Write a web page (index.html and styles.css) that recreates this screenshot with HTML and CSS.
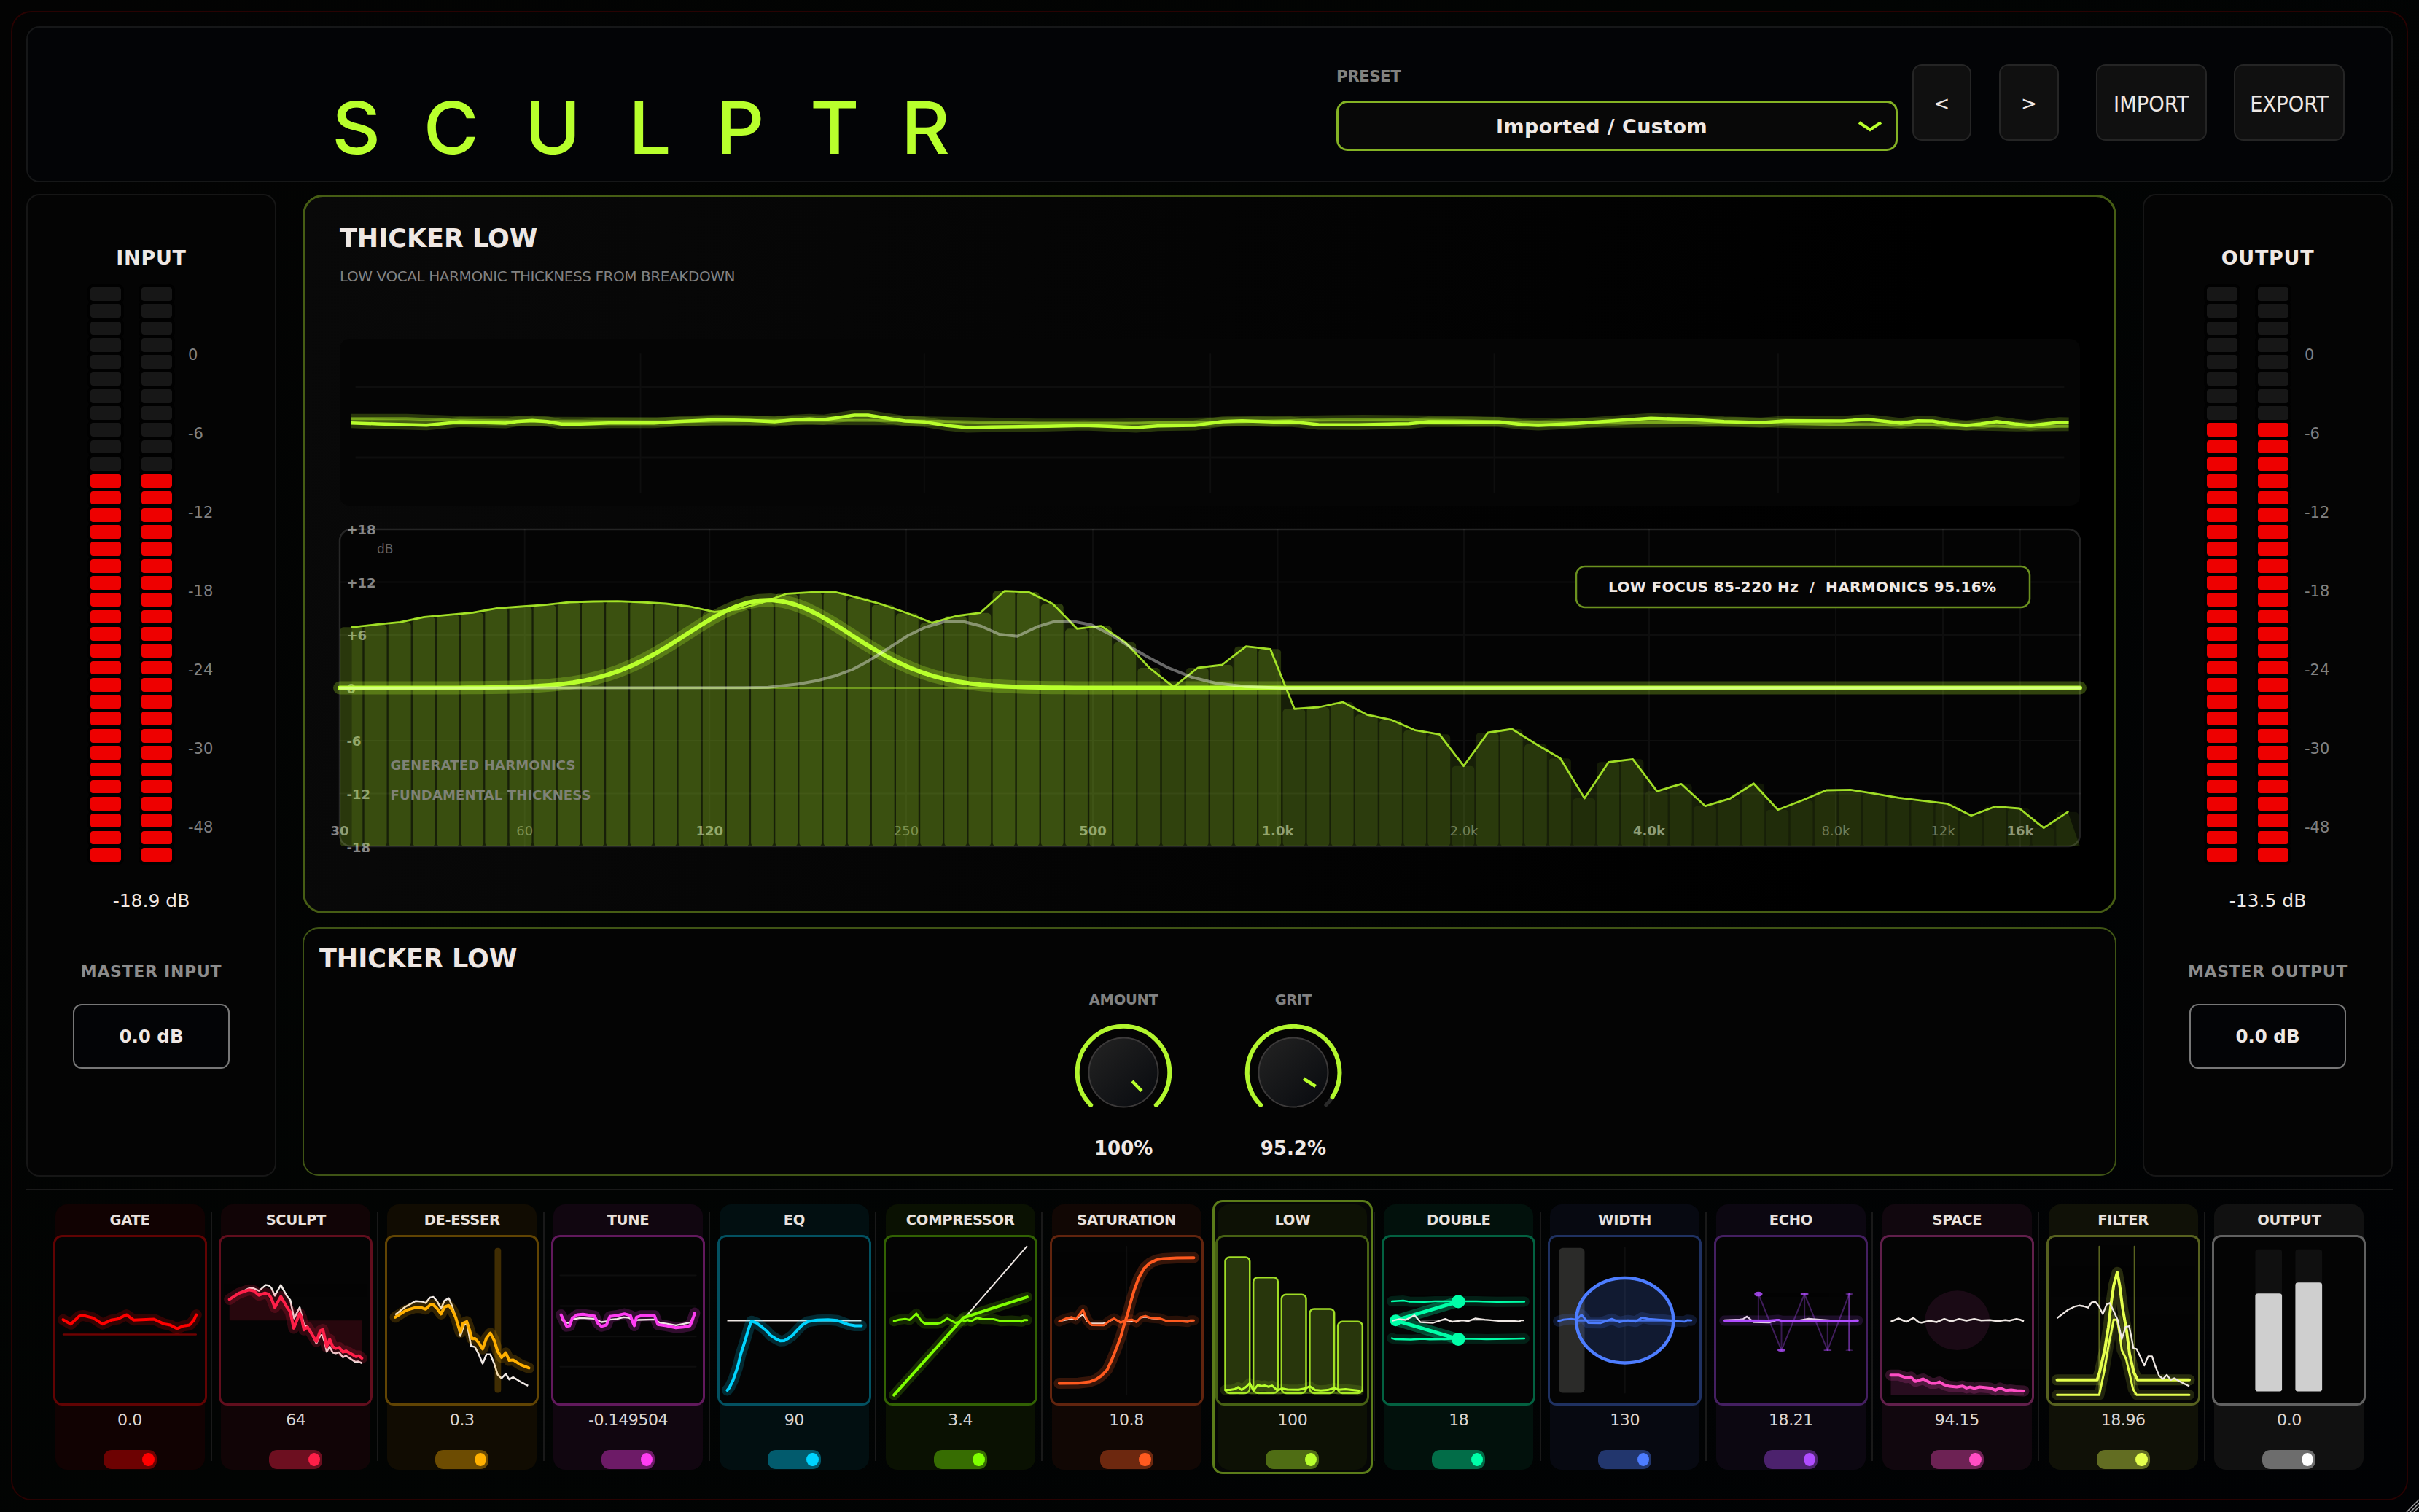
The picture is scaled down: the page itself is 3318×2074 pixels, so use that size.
FILE: index.html
```html
<!DOCTYPE html>
<html lang="en">
<head>
    <meta charset="UTF-8">
    <meta name="viewport" content="width=device-width, initial-scale=1.0">
    <title>SCULPTR</title>
    <link rel="stylesheet" href="styles.css">
</head>
<body>
  <div class="plugin">
    <header class="topbar">
        <svg class="logo" width="900" height="120" viewBox="0 0 900 120">
            <text y="96" transform="scale(1.05 1)" x="16.5 136 268.5 404 518 641 760">SCULPTR</text>
        </svg>
        <div class="preset">
            <div class="preset-label">PRESET</div>
            <div class="preset-select">
                <span>Imported / Custom</span>
                <svg width="34" height="16" viewBox="0 0 34 16"><path d="M2 3 L17 13 L32 3"/></svg>
            </div>
        </div>
        <button class="btn btn-prev">&lt;</button>
        <button class="btn btn-next">&gt;</button>
        <button class="btn btn-import"><span>IMPORT</span></button>
        <button class="btn btn-export"><span>EXPORT</span></button>
    </header>

    <main class="middle">
        <section class="side">
            <h2>INPUT</h2>
            <div class="meter" data-off="11"></div>
            <div class="level">-18.9 dB</div>
            <div class="master-label">MASTER INPUT</div>
            <div class="master-value">0.0 dB</div>
        </section>

        <div class="center">
            <section class="stage">
                <h1>THICKER LOW</h1>
                <p>LOW VOCAL HARMONIC THICKNESS FROM BREAKDOWN</p>
                <svg class="wave" viewBox="11 30 1545 688" preserveAspectRatio="none" id="wave"></svg>
                <svg class="spectrum" viewBox="0 0 2387 435" id="spectrum"></svg>
            </section>
            <section class="controls">
                <h1>THICKER LOW</h1>
                <div class="knobs">
                    <div class="knob">
                        <label>AMOUNT</label>
                        <svg width="140" height="140" viewBox="-70 -70 140 140">
                            <defs>
                                <linearGradient id="knobFill" x1="0" y1="0" x2="1" y2="1">
                                    <stop offset="0.1" stop-color="#212121"/>
                                    <stop offset="0.9" stop-color="#0a0c10"/>
                                </linearGradient>
                            </defs>
                            <path class="knob-arc" d="M-44.8 44.8 A63.3 63.3 0 1 1 44.8 44.8"/>
                            <circle class="knob-cap" r="47.5"/>
                            <path class="knob-pointer" d="M12 12 L25 25.5"/>
                        </svg>
                        <b>100%</b>
                    </div>
                    <div class="knob">
                        <label>GRIT</label>
                        <svg width="140" height="140" viewBox="-70 -70 140 140">
                            <path class="knob-track" d="M-44.8 44.8 A63.3 63.3 0 1 1 44.8 44.8"/>
                            <path class="knob-arc" d="M-44.8 44.8 A63.3 63.3 0 1 1 53.6 34"/>
                            <circle class="knob-cap" r="47.5"/>
                            <path class="knob-pointer" d="M14 8.5 L30.5 19"/>
                        </svg>
                        <b>95.2%</b>
                    </div>
                </div>
            </section>
        </div>

        <section class="side">
            <h2>OUTPUT</h2>
            <div class="meter" data-off="8"></div>
            <div class="level">-13.5 dB</div>
            <div class="master-label">MASTER OUTPUT</div>
            <div class="master-value">0.0 dB</div>
        </section>
    </main>

    <footer class="rack" id="rack">
        <!-- modules are added here -->
    </footer>
  </div>
  <svg class="resizer" width="18" height="18" viewBox="0 0 18 18"><path d="M1 18 L18 1 M6 18 L18 6 M11 18 L18 11"/></svg>
  <script src="script.js"></script>
</body>
</html>
```

FILE: styles.css
```css
* {
    box-sizing: border-box;
}
body {
    margin: 0;
    width: 3318px;
    height: 2074px;
    overflow: hidden;
    background: linear-gradient(135deg, #030303 0%, #020403 45%, #010204 100%);
    color: #efe8e4;
    font-family: Verdana, "DejaVu Sans", sans-serif;
    position: relative;
}
h1, h2, p {
    margin: 0;
}
.plugin {
    width: 3288px;
    height: 2043px;
    margin: 15px 0 0 15px;
    padding: 19px;
    border: 2px solid #280202;
    border-radius: 28px;
}

/* header */
.topbar {
    display: flex;
    align-items: flex-start;
    height: 214px;
    background: #030406;
    border: 2px solid #161718;
    border-radius: 18px;
}
.logo {
    margin: 77px 0 0 400px;
}
.logo text {
    font-family: Inter, Lato, sans-serif;
    font-size: 98.5px;
    font-weight: 500;
    fill: #b8ff2c;
}
.preset {
    width: 770px;
    margin: 54px 0 0 495px;
}
.preset-label {
    font-size: 21.5px;
    line-height: 26px;
    font-weight: bold;
    letter-spacing: -0.6px;
    color: #82827f;
}
.preset-select {
    display: flex;
    align-items: center;
    height: 69px;
    margin-top: 20px;
    border: 3px solid #84b224;
    border-radius: 15px;
    background: #080808;
}
.preset-select span {
    flex: 1;
    padding: 2px 0 0 10px;
    text-align: center;
    font-size: 27px;
    font-weight: bold;
    letter-spacing: 0.4px;
}
.preset-select svg {
    margin-right: 18px;
}
.preset-select path {
    fill: none;
    stroke: #b8ff2c;
    stroke-width: 4;
}
.btn {
    height: 105px;
    margin-top: 50px;
    padding: 3px 0 0;
    border: 2px solid #252525;
    border-radius: 13px;
    background: #101010;
    color: #efe8e4;
    font-family: inherit;
    font-size: 26px;
}
.btn-prev {
    width: 81px;
    margin-left: 20px;
}
.btn-next {
    width: 82px;
    margin-left: 38px;
}
.btn-import, .btn-export {
    width: 152px;
    margin-left: 51px;
    font-size: 30px;
}
.btn-export {
    margin-left: 37px;
}
.btn span {
    display: inline-block;
    margin: 0 -10px;
    transform: scaleX(0.91);
}

/* middle row */
.middle {
    display: grid;
    grid-template-columns: 343px 1fr 343px;
    gap: 36px;
    height: 1348px;
    margin-top: 16px;
}
.side {
    padding-top: 70px;
    border: 2px solid #161616;
    border-radius: 18px;
    background: #040404;
    text-align: center;
}
.side h2 {
    font-size: 27px;
    line-height: 32px;
    letter-spacing: 0.7px;
}
.meter {
    display: flex;
    height: 788px;
    margin: 24px 0 0 86px;
}
.meter-col {
    width: 42px;
    margin-right: 27.5px;
}
.seg {
    height: 18.8px;
    margin-bottom: 4.51px;
    border-radius: 4px;
    background: #171717;
    box-shadow: 0 0 0 4px #010101;
}
.seg.on {
    background: #ee0000;
}
.meter-scale {
    margin: 39px 0 0 -5px;
    text-align: left;
    font-size: 21px;
    line-height: 108px;
    color: #808080;
}
.meter-scale div {
    height: 108px;
}
.level {
    margin-top: 38px;
    font-size: 25px;
    line-height: 32px;
}
.master-label {
    margin-top: 67px;
    font-size: 22px;
    line-height: 28px;
    font-weight: bold;
    letter-spacing: 0.7px;
    color: #8c8c8c;
    white-space: nowrap;
}
.master-value {
    width: 215px;
    height: 89px;
    margin: 30px auto 0;
    border: 2.5px solid #777;
    border-radius: 12px;
    background: #030406;
    font-size: 24.5px;
    line-height: 86px;
    font-weight: bold;
}

.center {
    display: flex;
    flex-direction: column;
    gap: 18.5px;
    padding-top: 1px;
}
.center h1 {
    font-size: 35px;
    line-height: 40px;
}
.stage {
    height: 986px;
    padding: 37px 0 0 48px;
    border: 3px solid #465d14;
    border-radius: 28px;
    background: linear-gradient(100deg, #090909, #000 85%);
}
.stage p {
    margin-top: 20px;
    font-size: 20px;
    line-height: 24px;
    letter-spacing: -0.43px;
    color: #828282;
}
.stage svg {
    display: block;
    width: 2387px;
}
.wave {
    height: 229px;
    margin-top: 74px;
    border-radius: 14px;
    background: #050505;
}
.spectrum {
    height: 435px;
    margin-top: 32px;
    overflow: visible;
}
.controls {
    height: 341px;
    padding: 21px 0 0 21px;
    border: 2px solid #3f5415;
    border-radius: 22px;
    background: #040404;
}
.knobs {
    display: flex;
    justify-content: center;
    margin-top: 25px;
    margin-left: -24px;
}
.knob {
    width: 232.7px;
    text-align: center;
}
.knob label {
    display: block;
    font-size: 19.5px;
    line-height: 24px;
    font-weight: bold;
    letter-spacing: -0.3px;
    color: #828282;
}
.knob svg {
    display: block;
    margin: 17px auto 0;
}
.knob b {
    display: block;
    margin-top: 18px;
    font-size: 26px;
    line-height: 32px;
}
.knob-arc, .knob-track, .knob-pointer {
    fill: none;
    stroke: #b2f62e;
    stroke-width: 6;
    stroke-linecap: round;
}
.knob-track {
    stroke: #2a2a2a;
    stroke-width: 5;
}
.knob-pointer {
    stroke: #b8ff2c;
    stroke-width: 4.5;
    stroke-linecap: butt;
}
.knob-cap {
    fill: url(#knobFill);
    stroke: #3c3a3a;
    stroke-width: 2;
}

/* graph drawing */
.t {
    fill: none;
    stroke: var(--c);
    stroke-linejoin: round;
    stroke-linecap: round;
    vector-effect: non-scaling-stroke;
}
.white {
    stroke: #efe8e4;
    stroke-linecap: butt;
}
.faint {
    stroke: #0e0e0e;
    stroke-width: 2;
}
.wave .t {
    stroke-linecap: butt;
}
.spectrum text {
    font-size: 18px;
    font-weight: bold;
    fill: #868686;
}
.spectrum .minor {
    font-weight: normal;
    fill: #626262;
}
.spectrum .note {
    fill: #7f8276;
}
.spectrum .focus {
    font-size: 20px;
    fill: #efe8e4;
    white-space: pre;
}

/* module rack */
.rack {
    display: grid;
    grid-template-columns: repeat(14, 227.85px);
    height: 400px;
    margin-top: 17px;
    padding: 13px 0 0 28px;
    border-top: 2px solid #191919;
}
.module {
    --c: #fff;
    position: relative;
    width: 220px;
    height: 376px;
    margin-left: 4px;
    padding: 6px 7.5px;
    text-align: center;
}
.module.selected {
    border: 3px solid #5b7c19;
    border-radius: 14px;
    padding: 3px 4.5px;
    background: #060706;
}
.module + .module::before {
    content: "";
    position: absolute;
    left: -7px;
    top: 17px;
    width: 2px;
    height: 341px;
    background: #191919;
}
.module.selected::before {
    display: none;
}
.tab {
    height: 364px;
    border-radius: 16px;
    background: color-mix(in srgb, var(--c) 6%, #020202);
}
.name {
    height: 42px;
    font-size: 19.5px;
    line-height: 43px;
    font-weight: bold;
    letter-spacing: -0.3px;
    color: #e9e1dd;
}
.screen {
    display: block;
    width: 211px;
    height: 234px;
    margin-left: -3px;
    border-radius: 12px;
    background: #040404;
    box-shadow: inset 0 0 0 3px color-mix(in srgb, var(--c) 37%, #040404);
}
.value {
    height: 61px;
    font-size: 22px;
    line-height: 39px;
    letter-spacing: -0.4px;
    color: #ddd6d1;
}
.toggle {
    display: flex;
    align-items: center;
    justify-content: flex-end;
    width: 73px;
    height: 26px;
    margin: 0 auto;
    padding-right: 3px;
    border-radius: 11px;
    background: color-mix(in srgb, var(--c) 42%, #030303);
}
.toggle i {
    width: 16.4px;
    height: 18.7px;
    border-radius: 50%;
    background: var(--c);
}
.resizer {
    position: absolute;
    right: 0;
    bottom: 0;
}
.resizer path {
    stroke: #a8a8a8;
    stroke-width: 1.5;
}
```

FILE: script.js
```javascript
// Meters
document.querySelectorAll(".meter").forEach(meter => {
    const off = Number(meter.dataset.off);
    let col = "";
    for (let i = 0; i < 34; i++) {
        col += `<div class="seg${i >= off ? " on" : ""}"></div>`;
    }
    const marks = ["0", "-6", "-12", "-18", "-24", "-30", "-48"];
    meter.innerHTML = `<div class="meter-col">${col}</div><div class="meter-col">${col}</div>` +
        `<div class="meter-scale">${marks.map(m => `<div>${m}</div>`).join("")}</div>`;
});

function line(points, width, extra = "") {
    return `<polyline class="t" points="${points}" stroke-width="${width}" ${extra}/>`;
}
function glow(points, width, glowWidth = 15, opacity = 0.18) {
    return line(points, glowWidth, `opacity="${opacity}"`) + line(points, width);
}
function white(points, width = 2.5) {
    return `<polyline class="t white" points="${points}" stroke-width="${width}"/>`;
}
function faint(x1, y1, x2, y2) {
    return `<line class="t faint" x1="${x1}" y1="${y1}" x2="${x2}" y2="${y2}"/>`;
}

// Waveform strip
const waveMain = "21,376 45,380 88,385 105,378 118,372 140,375 158,377 168,370 182,366 195,370 208,381 225,381 250,376 290,376 310,370 345,363 375,366 397,371 415,363 428,360 440,363 455,353 468,344 480,344 495,355 513,368 530,372 550,387 568,395 590,393 640,390 672,386 700,391 718,395 737,388 770,386 795,370 812,367 840,372 855,371 880,383 915,384 950,380 960,379 978,371 1040,372 1060,382 1075,386 1110,378 1150,364 1175,357 1210,361 1240,370 1273,375 1295,367 1345,368 1367,361 1385,370 1397,377 1412,367 1425,368 1440,380 1455,387 1468,380 1482,370 1498,380 1512,387 1525,380 1538,373 1546,374";
const waveSlow = "21,358 70,358 110,365 200,370 300,372 370,366 430,365 500,366 570,372 630,378 700,378 800,372 880,364 920,362 1000,366 1060,374 1150,376 1250,372 1340,382 1420,383 1500,391 1546,390";
let wave = faint(25, 228, 1542, 228) + faint(25, 518, 1542, 518);
[278, 530, 784, 1036, 1288].forEach(x => wave += faint(x, 88, x, 664));
wave += line(waveSlow, 13, 'opacity="0.2"') + line(waveMain, 14, 'opacity="0.2"');
wave += line(waveSlow, 4, 'opacity="0.45"') + line(waveMain, 4.5);
const waveEl = document.getElementById("wave");
waveEl.style.setProperty("--c", "#b8ff2c");
waveEl.innerHTML = wave;

// Spectrum, levels measured from the top in thirds of a pixel
const levels = [512, 501, 491, 470, 461, 452, 434, 427, 420, 409, 406, 405, 409, 415, 427, 449, 438, 410,
    374, 368, 367, 392, 420, 455, 494, 466, 453, 363, 367, 416, 518, 507, 574, 679, 758, 679,
    667, 591, 602, 848, 841, 820, 872, 893, 936, 953, 1083, 946, 931, 993, 1052, 1216, 1067, 1055,
    1187, 1157, 1248, 1218, 1155, 1263, 1225, 1183, 1181, 1197, 1214, 1226, 1238, 1287, 1250, 1258, 1338, 1272
].map(v => (v - 109) / 3);
const W = 2387, H = 435, zero = 217.5, step = W / 72;

let spec = `<rect x="0" y="0" width="${W}" height="${H}" rx="16" fill="#040404"/>`;
[72.5, 145, 217.5, 290, 362.5].forEach(y => spec += faint(0, y, W, y));
const freqs = [["30", 0], ["60", 253.7, 1], ["120", 507.3], ["250", 777, 1], ["500", 1033], ["1.0k", 1286.5],
    ["2.0k", 1542, 1], ["4.0k", 1796], ["8.0k", 2052, 1], ["12k", 2199, 1], ["16k", 2305]];
freqs.forEach(([t, x, minor]) => {
    if (x) spec += faint(x, 0, x, H);
    spec += `<text x="${x}" y="419.5" text-anchor="middle" class="${minor ? "minor" : ""}">${t}</text>`;
});
["+18", "+12", "+6", "0", "-6", "-12", "-18"].forEach((t, i) => {
    spec += `<text x="9.5" y="${7 + i * 72.6}">${t}</text>`;
});
spec += `<text x="51" y="33" class="minor" style="font-size:17px">dB</text>`;

levels.forEach((y, i) => {
    const a = 0.03 + 0.25 * (1 - y / H);
    spec += `<rect x="${(i * step + 0.5).toFixed(1)}" y="${y.toFixed(1)}" width="${(step - 2.4).toFixed(1)}" height="${(H - y).toFixed(1)}" rx="5" fill="#b8ff2c" fill-opacity="${a.toFixed(3)}"/>`;
});
const linePts = levels.map((y, i) => `${((i + 0.5) * step).toFixed(1)},${y.toFixed(1)}`).join(" ");
spec += `<polygon points="${step / 2},${H} ${linePts} ${W},${H}" fill="#b8ff2c" fill-opacity="0.11"/>`;
spec += line(linePts, 2.8, 'opacity="0.85"');
spec += `<rect x="0" y="0" width="${W}" height="${H}" rx="16" fill="none" stroke="#fff" stroke-opacity="0.13" stroke-width="2.5"/>`;

let bell = "";
for (let x = 0; x <= W; x += 16) {
    bell += `${x},${(zero - 120.5 * Math.exp(-((x - 588) ** 2) / (2 * 113 * 113))).toFixed(1)} `;
}
bell += `${W},${zero}`;
const harm = [[32, 762], [700, 761], [740, 759], [790, 746], [820, 732], [850, 713], [880, 685], [905, 652], [930, 613], [970, 548], [1000, 512],
    [1030, 490], [1060, 487], [1092, 507], [1122, 541], [1152, 549], [1185, 510], [1213, 489], [1243, 487], [1275, 503],
    [1305, 540], [1340, 595], [1370, 638], [1400, 677], [1440, 717], [1480, 742], [1530, 756], [1590, 762]]
    .map(([x, y]) => `${((x - 31) / 1.2062).toFixed(1)},${((y - 109) / 3).toFixed(1)}`).join(" ") + ` ${W},${zero}`;
spec += line(`0,${zero} ${W},${zero}`, 3, 'opacity="0.4"');
spec += line(bell, 18, 'opacity="0.25"') + line(bell, 6);
spec += `<polyline class="t" points="${harm}" style="stroke:#fff" stroke-width="4" opacity="0.4"/>`;
spec += `<text class="note" x="69.5" y="329.5" textLength="254">GENERATED HARMONICS</text>`;
spec += `<text class="note" x="69.5" y="371" textLength="275">FUNDAMENTAL THICKNESS</text>`;
spec += `<rect x="1696" y="51" width="622" height="56" rx="12" fill="#040404" stroke="#6b911f" stroke-width="2.5"/>`;
spec += `<text class="focus" x="1740" y="85.5" textLength="532">LOW FOCUS 85-220 Hz  /  HARMONICS 95.16%</text>`;
const specEl = document.getElementById("spectrum");
specEl.style.setProperty("--c", "#b8ff2c");
specEl.innerHTML = spec;

// Module rack: name, value, colour, viewBox, drawing
const fill = (shape, opacity) => `<${shape} fill="var(--c)" fill-opacity="${opacity}"/>`;
const lowBars = [[1211, 314], [1274, 397], [1337, 467], [1400, 526], [1463, 578]];

const modules = [
    ["GATE", "0.0", "#ff0000", "57 223 359 699",
        line("81,631 390,631", 2.5, 'opacity="0.42" stroke-linecap="butt"') +
        glow("80,570 98,588 118,555 128,553 150,563 172,588 192,572 208,567 228,550 245,572 292,568 315,587 330,592 346,607 360,596 375,592 385,572 391,550", 4)],
    ["SCULPT", "64", "#ff1f48", "445 223 359 699",
        fill('polygon points="470,573 470,487 492,462 515,448 539,470 553,461 576,520 590,475 603,515 612,538 617,573"', 0.14) +
        fill('polygon points="638,573 644,612 652,600 673,660 682,615 688,610 697,682 704,650 718,688 735,703 765,721 779,728 779,573"', 0.14) +
        white("470,487 492,462 515,442 527,442 539,452 555,428 562,430 568,440 576,472 590,428 603,470 612,490 621,565 634,520 645,597 652,597 662,625 673,668 682,635 686,632 692,660 697,702 704,680 711,705 718,708 726,704 735,724 742,718 764,743 770,741 779,748") +
        glow("470,487 492,462 515,448 527,452 539,470 553,461 562,466 568,483 576,520 590,475 603,515 612,538 620,605 634,545 638,560 644,612 652,600 662,628 673,660 682,615 688,610 692,640 697,682 704,650 711,680 718,688 726,684 735,703 742,698 765,721 772,718 779,728", 4)],
    ["DE-ESSER", "0.3", "#ffb000", "833 223 359 699",
        white("857,550 880,518 905,494 920,496 928,502 938,480 946,477 955,495 964,525 972,492 982,482 990,515 998,560 1003,590 1009,637 1018,590 1024,585 1028,620 1034,678 1043,682 1052,712 1061,750 1070,712 1079,712 1088,750 1096,795 1105,810 1115,792 1123,815 1132,806 1150,825 1167,841") +
        fill('rect x="1089" y="276" width="15" height="594" rx="7" ry="12"', 0.24) +
        glow("857,560 882,532 905,520 920,522 928,527 938,510 946,509 955,525 964,547 972,518 982,512 990,530 998,560 1004,595 1009,622 1015,585 1024,578 1030,610 1036,648 1043,647 1052,665 1061,690 1070,645 1079,625 1088,655 1096,700 1105,725 1115,706 1123,737 1132,735 1150,755 1169,768", 4)],
    ["TUNE", "-0.149504", "#ff3df2", "1221 223 359 699",
        [389, 514, 639, 763].map(y => faint(1242, y, 1559, y)).join("") +
        line("1244,550 1251,575 1257,597 1264,595 1270,565 1282,550 1295,548 1322,555 1330,585 1338,597 1350,592 1358,557 1375,553 1392,546 1406,553 1410,575 1415,595 1420,560 1430,554 1462,554 1470,590 1490,595 1512,603 1530,600 1545,595 1550,575 1556,543", 15, 'opacity="0.18"') +
        white("1244,568 1257,583 1264,583 1272,568 1290,563 1322,566 1338,580 1350,577 1358,570 1375,567 1390,560 1402,562 1414,575 1424,571 1462,569 1475,583 1490,586 1512,593 1530,587 1545,582 1556,550", 2.3) +
        line("1244,550 1251,575 1257,597 1264,595 1270,565 1282,550 1295,548 1322,555 1330,585 1338,597 1350,592 1358,557 1375,553 1392,546 1406,553 1410,575 1415,595 1420,560 1430,554 1462,554 1470,590 1490,595 1512,603 1530,600 1545,595 1550,575 1556,543", 4)],
    ["EQ", "90", "#00d4ff", "73 223 343 699",
        white("95,573 394,573") +
        glow("95,859 100,848 108,818 118,765 125,712 135,655 143,605 149,576 160,583 172,600 182,615 192,635 205,650 213,657 222,656 230,648 240,635 250,615 262,592 275,578 295,572 320,570 340,573 355,583 365,590 380,595 394,595", 4)],
    ["COMPRESSOR", "3.4", "#7fff00", "445 223 343 699",
        white("627,560 765,268", 2) +
        glow("468,879 623,562 765,477", 4, 14, 0.17) +
        glow("468,576 480,570 493,567 503,571 518,545 530,577 537,586 565,586 573,582 587,565 605,583 612,580 620,570 625,577 632,571 640,577 653,563 665,567 690,568 707,576 730,574 753,578 758,572 765,572", 3, 14, 0.14)],
    ["SATURATION", "10.8", "#ff5a1f", "817 223 343 699",
        faint(988, 270, 988, 878) +
        white("838,576 865,567 875,570 891,548 900,577 908,585 935,585 945,582 960,567 975,580 988,575 1010,578 1020,562 1030,559 1045,565 1065,567 1078,575 1125,577 1138,573", 2) +
        glow("838,831 880,830 905,825 920,815 932,800 945,775 955,735 965,690 975,640 982,595 990,550 997,500 1005,450 1015,400 1027,360 1040,338 1055,325 1070,320 1100,317 1138,316", 4, 15, 0.2) +
        glow("838,577 852,566 866,560 875,568 891,530 900,572 910,592 937,593 950,575 960,565 975,582 985,573 1000,570 1010,580 1020,560 1030,555 1040,562 1062,565 1078,576 1100,575 1125,579 1131,573 1138,573", 3, 14, 0.14)],
    ["LOW", "100", "#b8ff2c", "1189 223 344 699",
        lowBars.map(([x, y]) => `<rect x="${x}" y="${y}" width="55" height="${871 - y}" rx="10" ry="18" class="t" style="fill:var(--c);fill-opacity:.2" stroke-width="2.5" stroke-opacity="0.85"/>`).join("") +
        line("1215,871 1514,871", 2, 'opacity="0.3"') +
        glow("1211,858 1222,858 1232,855 1240,847 1248,858 1258,845 1266,830 1274,860 1284,838 1292,842 1300,840 1308,845 1316,840 1328,860 1338,852 1350,856 1375,857 1390,852 1400,843 1412,858 1425,860 1440,858 1455,850 1465,857 1480,855 1510,861", 3, 14, 0.12)],
    ["DOUBLE", "18", "#00ffa8", "75 223 447 699",
        white("190,573 490,573", 1).replace("/>", ' opacity="0.4"/>') +
        glow("298,496 116,573 298,650", 5, 15, 0.28) +
        glow("105,495 138,492 155,496 200,497 230,495 300,495 350,495 410,497 490,496", 2.5, 14, 0.11) +
        glow("105,646 115,650 160,652 195,649 215,651 250,650 300,648 380,650 440,649 490,647", 2.5, 14, 0.11) +
        fill('ellipse cx="116" cy="573" rx="17" ry="24"', 1) +
        fill('ellipse cx="298" cy="496" rx="20" ry="27"', 1) +
        fill('ellipse cx="298" cy="650" rx="20" ry="27"', 1) +
        white("105,575 125,568 145,571 171,552 188,580 225,583 260,567 280,579 310,573 327,576 347,565 375,570 415,575 450,574 475,578 480,573 490,573", 2.3)],
    ["WIDTH", "130", "#4d7dff", "557 223 447 699",
        '<rect x="589" y="276" width="75" height="594" rx="12" ry="16" fill="#2b2b29"/>' +
        faint(781, 276, 781, 870) +
        '<ellipse class="t" cx="781" cy="573" rx="141" ry="174" style="fill:var(--c);fill-opacity:.18" stroke-width="4.5"/>' +
        line("640,573 922,573", 3, 'opacity="0.85"') +
        glow("588,576 603,570 625,567 640,570 655,550 675,583 710,584 743,567 765,580 790,573 812,578 830,562 850,567 900,572 925,576 955,578 962,572 974,573", 2.8, 15, 0.16)],
    ["ECHO", "18.21", "#b04dff", "1040 223 447 699",
        line("1169,465 1236,695 1303,465 1370,695 1433,465", 2, 'opacity="0.35"') +
        '<g opacity="0.3">' + line("1169,465 1169,573", 2) + line("1236,573 1236,695", 2) + line("1303,465 1303,573", 2) + line("1370,573 1370,695", 2) + '</g>' +
        line("1433,465 1433,695", 2.5, 'opacity="0.55"') +
        fill('ellipse cx="1169" cy="465" rx="12" ry="10"', 0.85) +
        fill('ellipse cx="1236" cy="695" rx="12" ry="6"', 0.8) +
        fill('ellipse cx="1303" cy="465" rx="12" ry="4.5"', 0.8) +
        fill('ellipse cx="1370" cy="695" rx="12" ry="2.5"', 0.7) +
        fill('ellipse cx="1433" cy="465" rx="11" ry="2"', 0.7) +
        fill('ellipse cx="1433" cy="695" rx="11" ry="1.5"', 0.6) +
        white("1070,572 1115,569 1124,568 1136,557 1155,580 1200,582 1225,570 1240,576 1280,575 1315,566 1340,569 1400,575 1458,572", 2.3) +
        glow("1070,574 1100,573 1200,574 1225,571 1240,575 1320,574 1458,574", 3, 14, 0.14)],
    ["SPACE", "94.15", "#ff4dc4", "38 223 437 699",
        fill('ellipse cx="257" cy="573" rx="92" ry="122"', 0.09) +
        fill('polygon points="68,877 68,797 90,797 138,823 160,813 195,831 206,825 235,843 283,850 365,859 446,862 446,877"', 0.15) +
        white("68,578 90,565 112,579 132,563 147,580 155,582 178,575 198,580 220,567 240,577 262,567 283,574 305,567 325,573 350,572 372,576 393,572 405,574 425,567 435,570 446,577") +
        glow("68,797 90,797 112,808 125,805 138,823 160,813 183,831 195,831 206,825 220,837 235,843 255,846 272,842 283,850 293,846 305,851 320,846 350,850 365,859 378,850 395,860 410,858 425,861 446,862", 4)],
    ["FILTER", "18.96", "#e5ff4d", "509 223 437 699",
        '<g opacity="0.38">' + line("659,270 659,877", 2) + line("759,270 759,877", 2) + '</g>' +
        glow("539,817 653,817 660,785 675,690 685,600 693,500 700,430 710,376 717,430 725,520 737,620 745,710 757,785 768,817 915,817", 4, 15, 0.16) +
        glow("539,878 659,878 672,790 685,680 700,570 710,570 717,630 723,695 735,730 745,790 755,855 765,878 915,878", 3, 14, 0.13) +
        white("539,564 570,530 590,516 602,512 615,515 627,521 637,500 648,497 658,515 669,547 680,508 689,502 700,535 711,570 717,610 723,650 734,600 744,597 750,640 756,687 765,690 775,720 787,758 798,720 809,720 818,760 829,800 840,813 851,796 862,817 872,810 890,825 915,843", 2.3)],
    ["OUTPUT", "0.0", "#ffffff", "981 223 437 699",
        '<rect x="1104" y="282" width="76" height="582" rx="8" ry="12" fill="#101010"/><rect x="1218" y="282" width="76" height="582" rx="8" ry="12" fill="#101010"/>' +
        '<rect x="1104" y="463" width="76" height="401" rx="8" ry="10" fill="#cfcfcf"/><rect x="1218" y="418" width="76" height="446" rx="8" ry="10" fill="#cfcfcf"/>']
];

document.getElementById("rack").innerHTML = modules.map(([name, value, color, box, art]) => `
    <div class="module${name === "LOW" ? " selected" : ""}" style="--c:${color}">
        <div class="tab">
            <div class="name">${name}</div>
            <svg class="screen" viewBox="${box}" preserveAspectRatio="none">${art}</svg>
            <div class="value">${value}</div>
            <div class="toggle"><i></i></div>
        </div>
    </div>`).join("");
```
